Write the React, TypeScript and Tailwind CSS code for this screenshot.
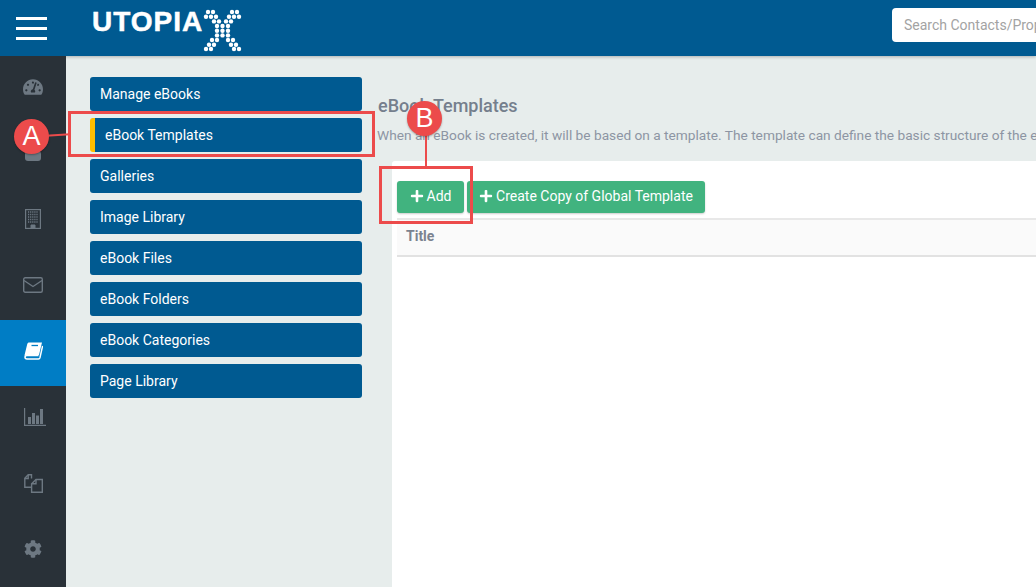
import { FaCog, FaPlus, FaTachometerAlt } from "react-icons/fa";

const navItems = [
  "Manage eBooks",
  "eBook Templates",
  "Galleries",
  "Image Library",
  "eBook Files",
  "eBook Folders",
  "eBook Categories",
  "Page Library",
];

// dot positions of the X in the logo, row by row
const logoDots: [number, number][] = [
  [5, 3], [10, 3], [29, 3], [34, 3],
  [3, 7.7], [8, 7.7], [13, 7.7], [26, 7.7], [31, 7.7], [36, 7.7],
  [11, 12.4], [16, 12.4], [23, 12.4], [28, 12.4],
  [14, 17], [19.5, 17], [25, 17],
  [14, 21.7], [19.5, 21.7], [25, 21.7],
  [14, 26.4], [19.5, 26.4], [25, 26.4],
  [9, 31], [14, 31], [25, 31], [30, 31],
  [6, 35.7], [11, 35.7], [28, 35.7], [33, 35.7],
  [3, 40], [8, 40], [31, 40], [36, 40],
];

function Logo() {
  return (
    <div className="relative ml-[26px] flex h-14 w-[150px] shrink-0">
      <span className="mt-[7px] text-[28px] leading-[30px] font-bold tracking-[1px] text-white [-webkit-text-stroke:0.5px_white] font-['Liberation_Sans',sans-serif]">
        UTOPIA
      </span>
      <svg className="absolute top-[9px] left-[111px]" width="39" height="44" viewBox="0 0 39 44" fill="#fff">
        {logoDots.map(([x, y]) => (
          <circle key={`${x}-${y}`} cx={x} cy={y} r="2.2" />
        ))}
      </svg>
    </div>
  );
}

function BuildingIcon() {
  return (
    <svg width="16" height="20" viewBox="0 0 16 20" fill="none" stroke="currentColor">
      <rect x="0.6" y="0.6" width="14.8" height="18.8" strokeWidth="1.2" />
      <path d="M3 3h10M3 5.5h10M3 8h10M3 10.5h10M3 13h10" strokeWidth="1.3" strokeDasharray="1.2 .9" />
      <path d="M6 19.5V16h4v3.5z" fill="currentColor" />
    </svg>
  );
}

function MailIcon() {
  return (
    <svg width="20" height="16" viewBox="0 0 20 16" fill="none" stroke="currentColor">
      <rect x="0.7" y="0.7" width="18.6" height="14.6" rx="1.5" strokeWidth="1.4" />
      <path d="M1 3.5l9 6L19 3.5" strokeWidth="1.4" />
    </svg>
  );
}

function BookIcon() {
  return (
    <svg width="19" height="18" viewBox="0 0 19 18" fill="none">
      <path d="M14.5 13.6H3c-1.3 0-2 .8-2 1.6s.7 1.7 2 1.7h11.5c.7 0 1.2-.3 1.4-1l2.7-12" stroke="#fff" strokeWidth="1.5" />
      <path d="M5.2.5h12.8L15 13H2c-.7 0-1.2.2-1.6.7L3.2 2.2C3.5 1 4.2.5 5.2.5z" fill="#fff" />
      <path d="M7.5 3.5h6.5" stroke="#007dc5" strokeWidth="1.3" />
    </svg>
  );
}

function ChartIcon() {
  return (
    <svg className="ml-1" width="22" height="18" viewBox="0 0 22 18" fill="currentColor">
      <path d="M0 0h1.2v16.8H22V18H0z" />
      <rect x="4" y="9" width="3" height="7" />
      <rect x="8" y="5" width="3" height="11" />
      <rect x="12" y="7.5" width="3" height="8.5" />
      <rect x="16" y="1" width="3" height="15" />
    </svg>
  );
}

function CopyIcon() {
  return (
    <svg width="19" height="19" viewBox="0 0 19 19" fill="none" stroke="currentColor" strokeWidth="1.4">
      <path d="M7.5 4.5V0.8H4.2L0.8 4.3V13.2H7" />
      <path d="M4.2 1v3.5H0.8" />
      <path d="M12 5.5h6.3v12.8H7.6V9.8z" />
      <path d="M12 5.5v4.3H7.6" />
    </svg>
  );
}

function UsersIcon() {
  return (
    <svg width="16" height="16" viewBox="0 0 16 16" fill="currentColor">
      <circle cx="8" cy="4" r="4" />
      <rect x="0" y="6" width="16" height="10" rx="3" />
    </svg>
  );
}

const sideIcons = [
  <FaTachometerAlt key="dash" size={20} />,
  <UsersIcon key="users" />,
  <BuildingIcon key="buildings" />,
  <MailIcon key="mail" />,
  <BookIcon key="books" />,
  <ChartIcon key="reports" />,
  <CopyIcon key="docs" />,
  <FaCog key="settings" size={18} />,
];

function Sidebar() {
  return (
    <aside className="w-[66px] shrink-0 bg-[#293138] text-[#6d7882]">
      {sideIcons.map((icon, i) => (
        <div
          key={i}
          className={`flex h-[66px] items-center justify-center pb-1 ${i === 4 ? "bg-[#007dc5] text-white" : ""}`}
        >
          {icon}
        </div>
      ))}
    </aside>
  );
}

export default function App() {
  return (
    <div className="relative h-[587px] w-[1036px] overflow-hidden bg-[#e7edec] font-['Roboto',sans-serif]">
      <header className="flex h-14 items-center bg-[#005a91] shadow-[0_1px_3px_rgba(0,0,0,0.25)]">
        <div className="flex w-[66px] shrink-0 flex-col items-center gap-[7px] pr-[3px]">
          <span className="h-[3px] w-[31px] bg-white" />
          <span className="h-[3px] w-[31px] bg-white" />
          <span className="h-[3px] w-[31px] bg-white" />
        </div>
        <Logo />
        <div className="mb-[6px] ml-[650px] flex h-[34px] w-[144px] shrink-0 items-center overflow-hidden rounded-l bg-white pl-3 text-sm whitespace-nowrap text-[#a3a3a3]">
          Search Contacts/Properties
        </div>
      </header>

      <div className="flex h-[531px]">
        <Sidebar />

        <nav className="ml-6 flex w-[272px] shrink-0 flex-col gap-[7px] pt-[21px]">
          {navItems.map((item) => (
            <div
              key={item}
              className={`flex h-[34px] items-center rounded-[3px] bg-[#005a91] text-sm text-white ${
                item === "eBook Templates" ? "border-l-[5px] border-[#ffbe00] pl-2.5" : "pl-2.5"
              }`}
            >
              {item}
            </div>
          ))}
        </nav>

        <main className="ml-[15px] min-w-0 flex-1 overflow-hidden">
          <h1 className="mt-10 ml-px text-lg leading-5 font-medium whitespace-nowrap text-[#757f8d]">
            eBook Templates
          </h1>
          <p className="mt-[9px] text-[13.7px] leading-5 whitespace-nowrap text-[#8d95a3]">
            When an eBook is created, it will be based on a template. The template can define the basic structure of the eBook
          </p>
          <div className="mt-4 ml-[15px] h-[426px] rounded-tl-[3px] bg-white pt-5 pl-[5px]">
            <div className="flex gap-[3px]">
              <button className="flex h-8 w-[67px] items-center justify-center gap-[3px] rounded-[3px] bg-[#41b37f] pb-0.5 text-sm text-white shadow-[0_1px_2px_rgba(0,0,0,0.2)]">
                <FaPlus size={14} />
                Add
              </button>
              <button className="flex h-8 w-[238px] items-center justify-center gap-[3px] rounded-[3px] bg-[#41b37f] pb-0.5 text-sm text-white shadow-[0_1px_2px_rgba(0,0,0,0.2)]">
                <FaPlus size={14} />
                Create Copy of Global Template
              </button>
            </div>
            <div className="mt-[5px] flex h-[39px] items-center border-y-2 border-t-[#e8e8e8] border-b-[#e2e2e2] bg-[#fafafa] pb-[3px] pl-[9px] text-sm font-bold text-[#7b8390]">
              Title
            </div>
          </div>
        </main>
      </div>

      {/* callout annotations over the page */}
      <div className="absolute top-[111px] left-[68px] h-[46px] w-[307px] border-[3px] border-[#ec4b4b]" />
      <div className="absolute top-[166px] left-[379px] h-[58px] w-[94px] border-[3px] border-[#ec4b4b]" />
      <div className="absolute top-[134px] left-[46px] h-0.5 w-[24px] -rotate-3 bg-[#ec4b4b]" />
      <div className="absolute top-[130px] left-[425px] h-[38px] w-0.5 bg-[#ec4b4b]" />
      <div className="absolute top-[119px] left-[14px] flex h-[35px] w-[35px] items-center justify-center rounded-full bg-[#ec4b4b] text-[27px] text-white shadow-[0_1px_2px_rgba(0,0,0,0.3)] font-['Liberation_Sans',sans-serif]">
        A
      </div>
      <div className="absolute top-[101px] left-[407px] flex h-[35px] w-[35px] items-center justify-center rounded-full bg-[#ec4b4b] text-[27px] text-white shadow-[0_1px_2px_rgba(0,0,0,0.3)] font-['Liberation_Sans',sans-serif]">
        B
      </div>
    </div>
  );
}
